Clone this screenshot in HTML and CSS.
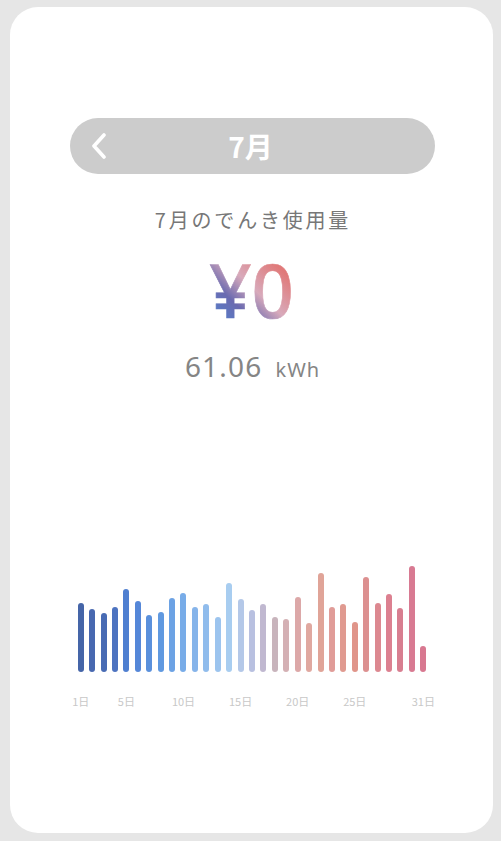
FILE: index.html
```html
<!DOCTYPE html>
<html lang="ja">
<head>
<meta charset="utf-8">
<title>7月のでんき使用量</title>
<link rel="stylesheet" href="styles.css">
</head>
<body>
<div class="card">
  <div class="month-bar">
    <div class="back">
      <svg width="16" height="26" viewBox="0 0 16 26"><path d="M13 2 L3 13 L13 24" fill="none" stroke="#fff" stroke-width="3.6" stroke-linecap="round" stroke-linejoin="round"/></svg>
    </div>
    <div class="month-title">7月</div>
    <div></div>
  </div>
  <div class="subtitle">7月のでんき使用量</div>
  <div class="price">¥0</div>
  <div class="usage"><span class="kwh-num">61.06</span><span class="kwh-unit">kWh</span></div>
  <div class="chart">
    <div class="col"><div class="bar" style="height:69px;background:#4565a8"></div><span class="lbl">1日</span></div>
    <div class="col"><div class="bar" style="height:63px;background:#4868b0"></div><span class="lbl"></span></div>
    <div class="col"><div class="bar" style="height:59px;background:#486bb4"></div><span class="lbl"></span></div>
    <div class="col"><div class="bar" style="height:65px;background:#4d73c0"></div><span class="lbl"></span></div>
    <div class="col"><div class="bar" style="height:83px;background:#4f7fd0"></div><span class="lbl">5日</span></div>
    <div class="col"><div class="bar" style="height:71px;background:#5587d8"></div><span class="lbl"></span></div>
    <div class="col"><div class="bar" style="height:57px;background:#5a90dc"></div><span class="lbl"></span></div>
    <div class="col"><div class="bar" style="height:60px;background:#6099e0"></div><span class="lbl"></span></div>
    <div class="col"><div class="bar" style="height:74px;background:#6ca2e4"></div><span class="lbl"></span></div>
    <div class="col"><div class="bar" style="height:79px;background:#78ace8"></div><span class="lbl">10日</span></div>
    <div class="col"><div class="bar" style="height:65px;background:#86b4ea"></div><span class="lbl"></span></div>
    <div class="col"><div class="bar" style="height:68px;background:#90bcec"></div><span class="lbl"></span></div>
    <div class="col"><div class="bar" style="height:55px;background:#9cc4ee"></div><span class="lbl"></span></div>
    <div class="col"><div class="bar" style="height:89px;background:#a8cdf0"></div><span class="lbl"></span></div>
    <div class="col"><div class="bar" style="height:73px;background:#b4c8e8"></div><span class="lbl">15日</span></div>
    <div class="col"><div class="bar" style="height:62px;background:#b8c0e0"></div><span class="lbl"></span></div>
    <div class="col"><div class="bar" style="height:68px;background:#c0b8d0"></div><span class="lbl"></span></div>
    <div class="col"><div class="bar" style="height:55px;background:#c8b4bc"></div><span class="lbl"></span></div>
    <div class="col"><div class="bar" style="height:53px;background:#d4b0b4"></div><span class="lbl"></span></div>
    <div class="col"><div class="bar" style="height:75px;background:#dca8a8"></div><span class="lbl">20日</span></div>
    <div class="col"><div class="bar" style="height:49px;background:#e0a8a0"></div><span class="lbl"></span></div>
    <div class="col"><div class="bar" style="height:99px;background:#e0a498"></div><span class="lbl"></span></div>
    <div class="col"><div class="bar" style="height:65px;background:#e09c98"></div><span class="lbl"></span></div>
    <div class="col"><div class="bar" style="height:68px;background:#e09a90"></div><span class="lbl"></span></div>
    <div class="col"><div class="bar" style="height:50px;background:#e0958a"></div><span class="lbl">25日</span></div>
    <div class="col"><div class="bar" style="height:95px;background:#dc9090"></div><span class="lbl"></span></div>
    <div class="col"><div class="bar" style="height:69px;background:#dc8890"></div><span class="lbl"></span></div>
    <div class="col"><div class="bar" style="height:78px;background:#dc8090"></div><span class="lbl"></span></div>
    <div class="col"><div class="bar" style="height:64px;background:#d87e90"></div><span class="lbl"></span></div>
    <div class="col"><div class="bar" style="height:106px;background:#d87a92"></div><span class="lbl"></span></div>
    <div class="col"><div class="bar" style="height:26px;background:#d87890"></div><span class="lbl">31日</span></div>
  </div>
</div>
</body>
</html>
```
FILE: styles.css
```css
html, body {
  margin: 0;
  padding: 0;
}
body {
  background: #e6e6e6;
  font-family: "Noto Sans", "Noto Sans CJK JP", sans-serif;
  padding: 7px 0 0 10px;
  height: 841px;
  box-sizing: border-box;
}
.card {
  width: 483px;
  height: 826px;
  background: #ffffff;
  border-radius: 28px;
  padding-top: 111px;
  box-sizing: border-box;
  display: flex;
  flex-direction: column;
}
.month-bar {
  margin: 0 58px 0 60px;
  height: 56px;
  border-radius: 28px;
  background: #cccccc;
  display: grid;
  grid-template-columns: 1fr auto 1fr;
  align-items: center;
}
.back {
  padding-left: 21px;
  display: flex;
  align-items: center;
}
.month-title {
  color: #ffffff;
  font-family: "Noto Sans CJK JP", sans-serif;
  font-weight: 700;
  font-size: 28px;
  line-height: 32px;
  margin-left: -4px;
}
.subtitle {
  margin-top: 32px;
  text-align: center;
  color: #777777;
  font-family: "Noto Sans CJK JP", sans-serif;
  font-size: 20px;
  line-height: 28px;
  letter-spacing: 2.8px;
  padding-left: 3px;
}
.price {
  margin-top: 16px;
  align-self: center;
  font-size: 74px;
  line-height: 80px;
  font-weight: 500;
  -webkit-text-stroke: 0.6px transparent;
  background: linear-gradient(to top right, #4a8ad8 0%, #6a6ab0 32%, #d8aabb 52%, #e07a7a 80%, #e07070 100%);
  -webkit-background-clip: text;
  background-clip: text;
  color: transparent;
}
.usage {
  margin-top: 18px;
  text-align: center;
  color: #858585;
  padding-left: 2px;
}
.kwh-num {
  font-size: 28px;
  line-height: 36px;
  letter-spacing: 1.2px;
}
.kwh-unit {
  font-size: 20px;
  margin-left: 13px;
  letter-spacing: 1px;
}
.chart {
  margin: 182px 64px 0 65px;
  display: grid;
  grid-template-columns: repeat(31, minmax(0, 1fr));
  align-items: end;
}
.col {
  display: flex;
  flex-direction: column;
  align-items: center;
  min-width: 0;
}
.bar {
  width: 6px;
  border-radius: 3px;
}
.lbl {
  margin-top: 22px;
  height: 14px;
  font-size: 11px;
  line-height: 14px;
  color: #c8c8c8;
  white-space: nowrap;
  font-family: "Noto Sans CJK JP", sans-serif;
}
```
